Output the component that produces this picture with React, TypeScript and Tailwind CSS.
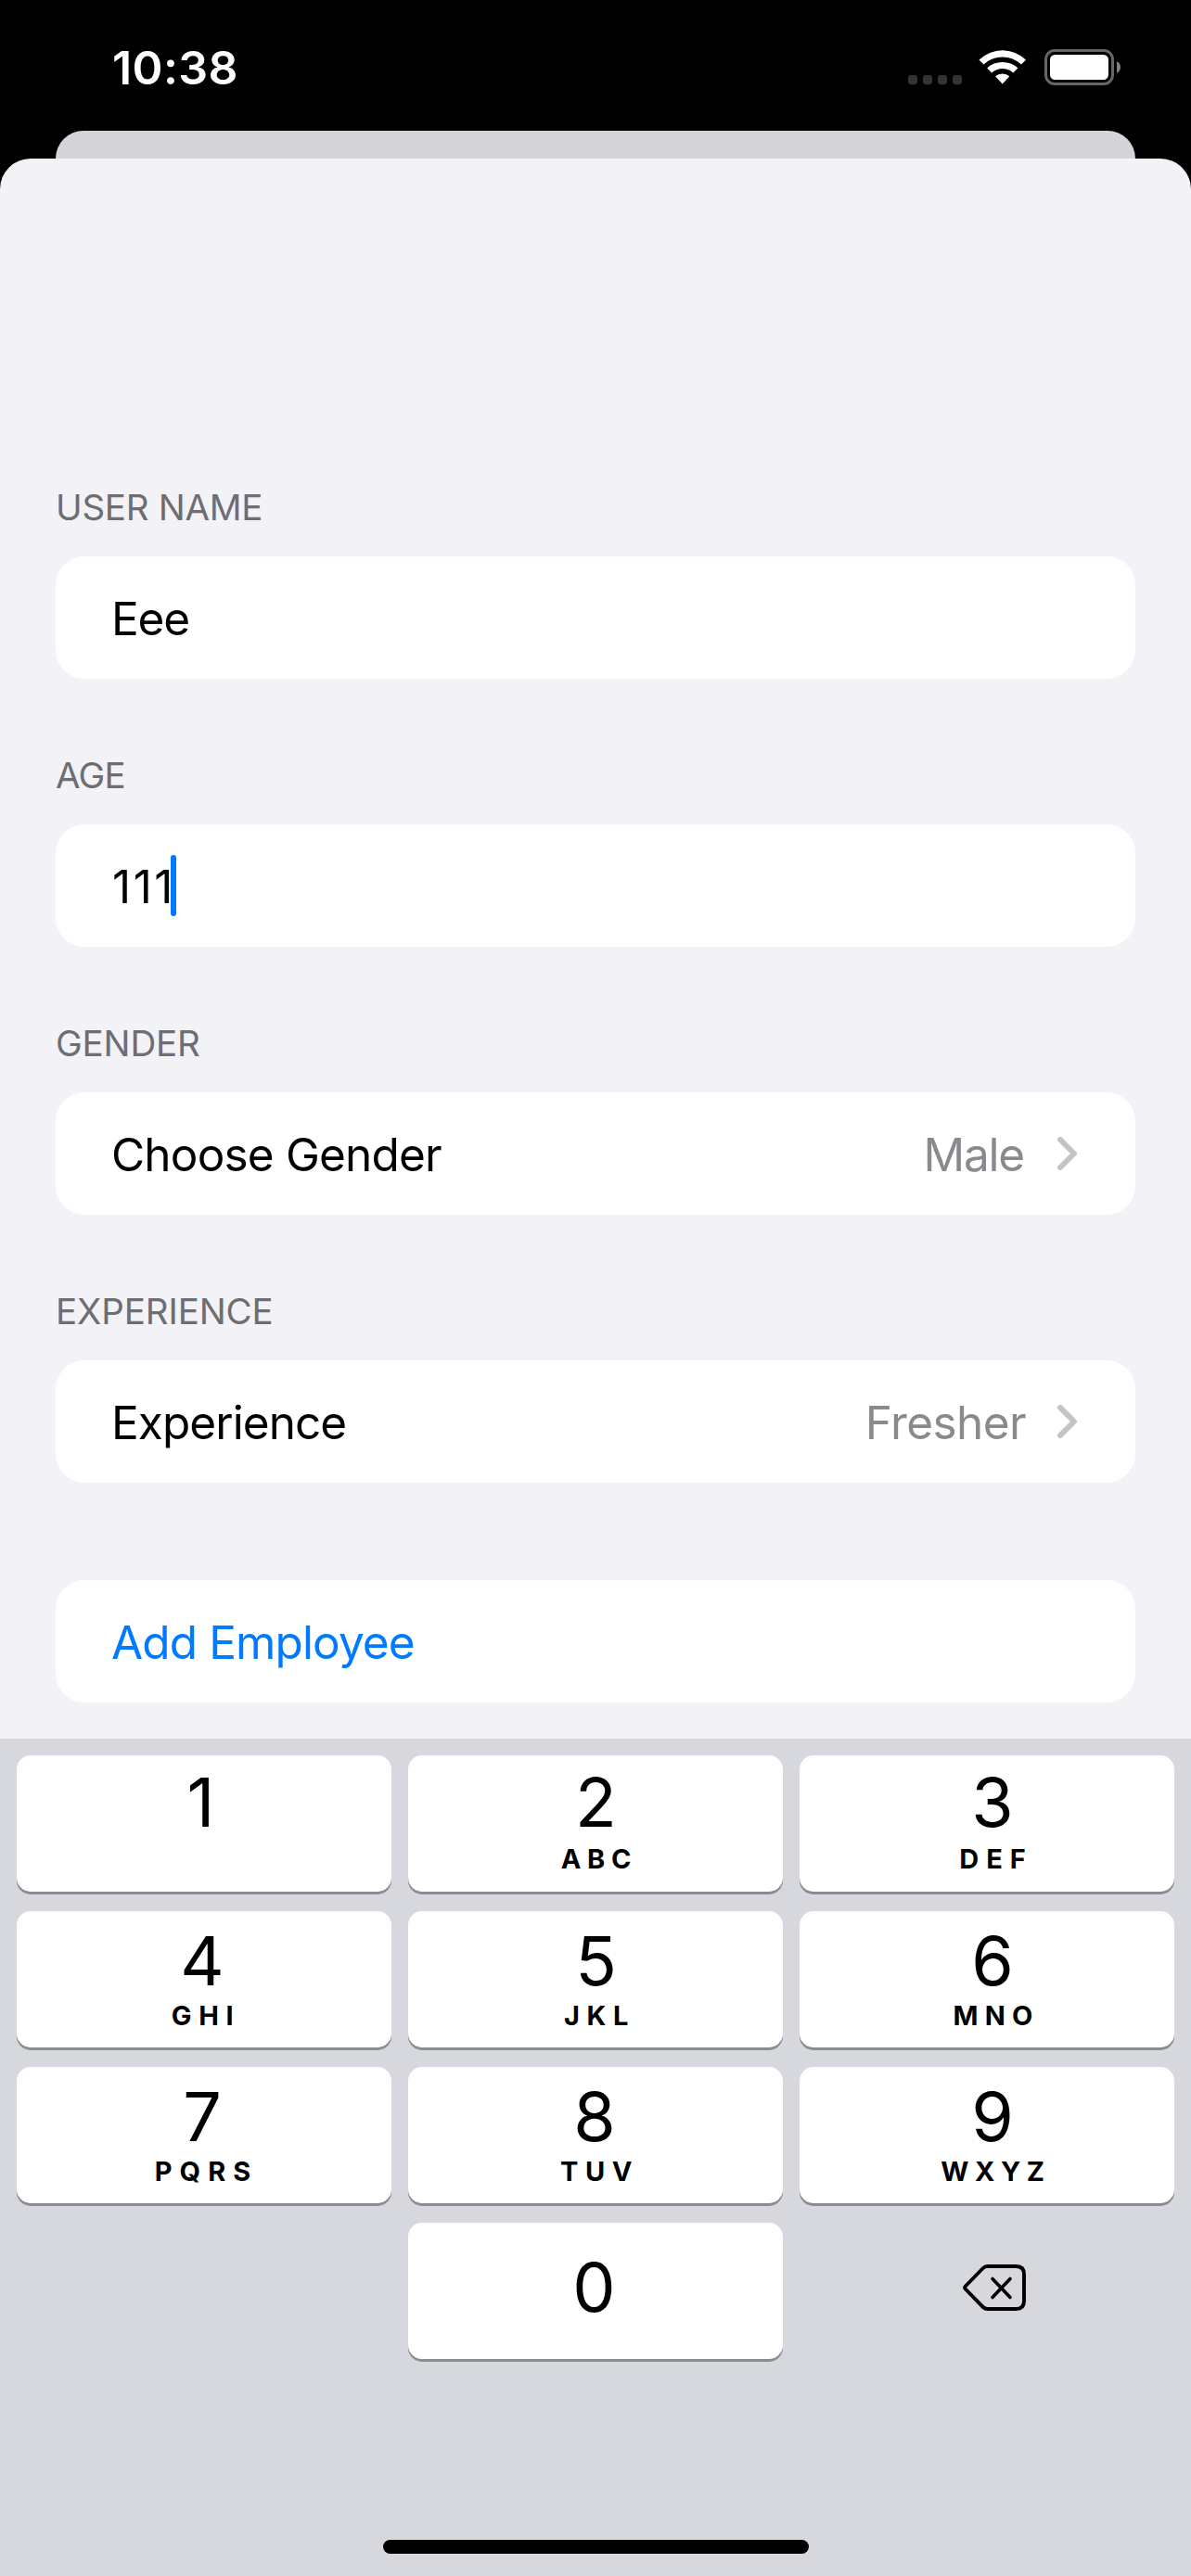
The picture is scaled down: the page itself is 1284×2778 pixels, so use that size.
import React from "react";

function StatusBar() {
  return (
    <div className="flex h-[141px] items-start pl-[121px] pr-[76px]">
      <span className="mt-[47px] text-[50px] font-semibold leading-[52px] tracking-[0.4px] text-white">10:38</span>
      <div className="ml-auto mt-[52px] flex">
        <div className="mt-[29px] flex gap-[6px]">
          {[0, 1, 2, 3].map((i) => (
            <span key={i} className="size-[10px] rounded-[3px] bg-[#333333]" />
          ))}
        </div>
        <svg className="ml-[18px] mt-px" width="52" height="39" viewBox="0 0 52 39" fill="none">
          <path d="M.5 11.5a36.4 36.4 0 0 1 50.5 0l-5 5a29.4 29.4 0 0 0-40.5 0z" fill="#fff" />
          <path d="M9.2 20.5a24 24 0 0 1 33.1 0l-5 5a16.8 16.8 0 0 0-23.1 0z" fill="#fff" />
          <path d="M18 29.3a11.6 11.6 0 0 1 15.4 0l-7.7 8.3z" fill="#fff" />
        </svg>
        <svg className="ml-[19px]" width="82" height="42" viewBox="0 0 82 42" fill="none">
          <rect x="1.5" y="2.5" width="72" height="36" rx="9.5" stroke="#666" strokeWidth="3" />
          <rect x="6" y="7" width="63" height="27" rx="5.5" fill="#fff" />
          <path d="M78 14.3c2.5 1 4 3.4 4 6.2s-1.5 5.2-4 6.2z" fill="#808080" />
        </svg>
      </div>
    </div>
  );
}

function Chevron() {
  return (
    <svg width="21" height="36" viewBox="0 0 21 36" fill="none">
      <path d="M3 3l15 15L3 33" stroke="#c4c4c6" strokeWidth="6" strokeLinecap="round" strokeLinejoin="round" />
    </svg>
  );
}

function Section({ label, spacing, children }: { label: string; spacing: string; children: React.ReactNode }) {
  return (
    <section className="mb-[84px]">
      <h2 className={`mb-[33px] text-[38.5px] leading-[40px] text-[#6d6d72] ${spacing}`}>{label}</h2>
      <Card>{children}</Card>
    </section>
  );
}

function Card({ children }: { children: React.ReactNode }) {
  return (
    <div className="flex h-[132px] items-center rounded-[31px] bg-white pl-[60px] pr-[63px] text-[49.5px] leading-[60px] text-black">
      {children}
    </div>
  );
}

type Key = { digit: string; letters?: string; tracking?: string };

const keys: Key[] = [
  { digit: "1" },
  { digit: "2", letters: "ABC", tracking: "tracking-[6.8px] -mr-[7px]" },
  { digit: "3", letters: "DEF", tracking: "tracking-[8px] -mr-[8px]" },
  { digit: "4", letters: "GHI", tracking: "tracking-[7.6px] -mr-[8px]" },
  { digit: "5", letters: "JKL", tracking: "tracking-[7.6px] -mr-[8px]" },
  { digit: "6", letters: "MNO", tracking: "tracking-[7.2px] -mr-[8px]" },
  { digit: "7", letters: "PQRS", tracking: "tracking-[8px] -mr-[9px]" },
  { digit: "8", letters: "TUV", tracking: "tracking-[7.6px] -mr-[8px]" },
  { digit: "9", letters: "WXYZ", tracking: "tracking-[6.6px] -mr-[7px]" },
];

const columnShift = ["pr-[4px]", "pl-px", "pl-[12px]"];

const keyBase =
  "flex h-[147px] flex-col items-center rounded-[15px] bg-white text-black shadow-[0_3px_0_#8b8c90]";

function Keypad() {
  return (
    <div className="flex h-[903px] flex-col bg-[#d6d8dd]">
      <div className="grid grid-cols-3 gap-x-[18px] gap-y-[21px] px-[18px] pt-[18px]">
        {keys.map((k, i) => (
          <button key={k.digit} className={`${keyBase} ${columnShift[i % 3]} ${i < 3 ? "pt-[14px]" : "pt-[17px]"}`}>
            <span className={`text-[73.5px] leading-[73px] ${i === 0 || i === 7 ? "mr-[3px]" : ""}`}>{k.digit}</span>
            {k.letters && (
              <span className={`text-[29px] font-bold leading-[29px] ${i < 3 ? "mt-[10px]" : "mt-[8px]"} ${k.tracking}`}>
                {k.letters}
              </span>
            )}
          </button>
        ))}
        <div />
        <button className={`${keyBase} pr-[3px] pt-[33px]`}>
          <span className="text-[73.5px] leading-[73px]">0</span>
        </button>
        <button className="flex h-[147px] items-center justify-center pl-[16px]" aria-label="Delete">
          <svg className="-mt-[7px]" width="68" height="50" viewBox="0 0 68 50" fill="none" stroke="#000" strokeLinecap="round" strokeLinejoin="round">
            <path
              d="M26.5 2H57.5Q66 2 66 10.5V39.5Q66 48 57.5 48H26.5Q23.8 48 21.8 46L2.8 26.5Q1.5 25 2.8 23.5L21.8 4Q23.8 2 26.5 2Z"
              strokeWidth="3.9"
            />
            <path d="M32 15.5L51 35.5M51 15.5L32 35.5" strokeWidth="3.6" />
          </svg>
        </button>
      </div>
      <div className="mx-auto mb-[24px] mt-auto h-[15px] w-[459px] rounded-full bg-black" />
    </div>
  );
}

export default function App() {
  return (
    <div className="flex h-[2778px] w-[1284px] flex-col overflow-hidden bg-black font-['Inter',sans-serif]">
      <StatusBar />
      <div className="mx-[60px] h-[30px] shrink-0 rounded-t-[30px] bg-[#d5d4d9]" />
      <main className="flex flex-1 flex-col rounded-t-[33px] bg-[#f2f2f7] px-[60px] pt-[356px]">
        <Section label="USER NAME" spacing="tracking-[-0.27px]">
          <span className="pt-[2px] tracking-[-1.2px]">Eee</span>
        </Section>
        <Section label="AGE" spacing="tracking-[-0.7px]">
          <span className="pl-px pt-[2px] tracking-[2.5px]">111</span>
          <span className="-ml-[5px] h-[66px] w-[6px] rounded-full bg-[#007aff]" />
        </Section>
        <Section label="GENDER" spacing="tracking-[-0.16px]">
          <span className="pt-[2px] tracking-[-0.82px]">Choose Gender</span>
          <span className="ml-auto mr-[36px] pt-[2px] tracking-[-1.2px] text-[#8a8a8e]">Male</span>
          <Chevron />
        </Section>
        <Section label="EXPERIENCE" spacing="tracking-[-0.1px]">
          <span className="pt-[2px] tracking-[-0.93px]">Experience</span>
          <span className="ml-auto mr-[34px] pt-[2px] tracking-[-0.6px] text-[#8a8a8e]">Fresher</span>
          <Chevron />
        </Section>
        <div className="mt-[21px]">
          <Card>
            <button className="pt-[2px] tracking-[-0.88px] text-[#007aff]">Add Employee</button>
          </Card>
        </div>
      </main>
      <Keypad />
    </div>
  );
}
